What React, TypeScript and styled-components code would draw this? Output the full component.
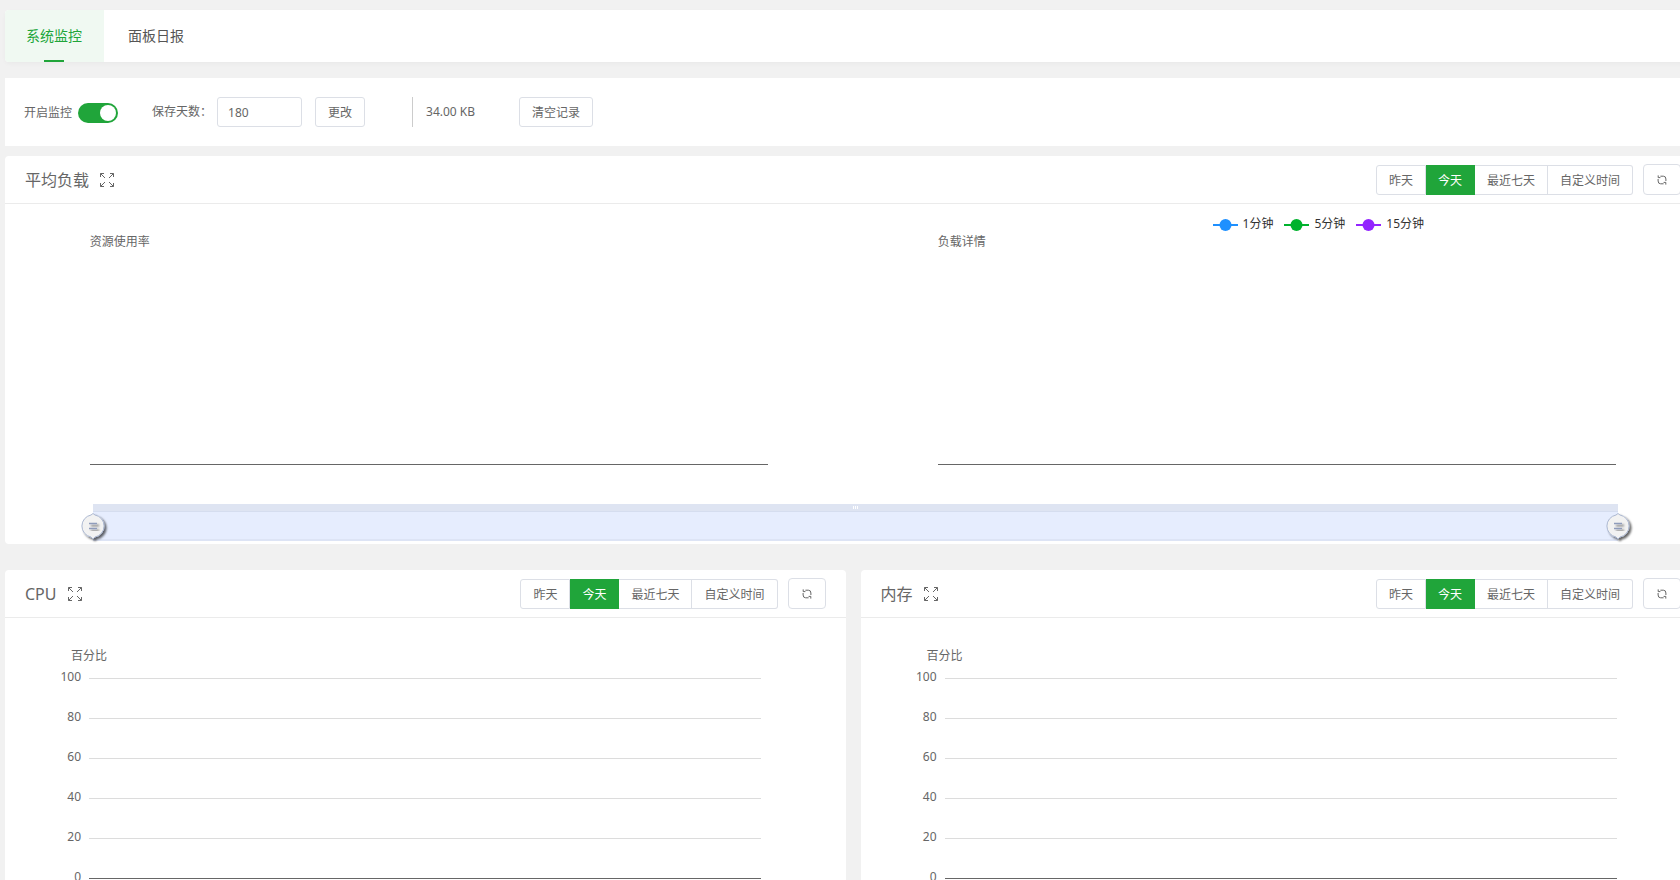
import React from "react";
import styled, { createGlobalStyle } from "styled-components";

const GREEN = "#20a53a";
const BORDER = "#dcdfe6";

const GlobalStyle = createGlobalStyle`
  * { box-sizing: border-box; }
  body {
    margin: 0;
    background: #f1f1f1;
    color: #666;
    font: 12px/16px "Noto Sans", "Noto Sans CJK SC", sans-serif;
  }
  button, input { font: inherit; color: inherit; margin: 0; }
  h2 { margin: 0; font-weight: 400; }
`;

const Viewport = styled.div`
  height: 100vh;
  overflow: hidden;
`;

/* The content is a little wider than the visible frame and runs under its right edge. */
const Page = styled.main`
  width: calc(100% + 16px);
  padding: 10px 0 0;
  margin-left: 5px;
`;

const Tabs = styled.nav`
  display: flex;
  height: 52px;
  margin-bottom: 16px;
  background: #fff;
  border-radius: 4px;
  box-shadow: 0 2px 4px rgba(0, 0, 0, 0.03);
`;

const Tab = styled.button<{ $active?: boolean }>`
  display: flex;
  flex-direction: column;
  align-items: center;
  justify-content: space-between;
  padding: 16px ${(p) => (p.$active ? "22px 0 21px" : "24px 0")};
  border: 0;
  border-radius: 4px 0 0 4px;
  font-size: 14px;
  line-height: 20px;
  cursor: pointer;
  color: ${(p) => (p.$active ? GREEN : "#555")};
  background: ${(p) => (p.$active ? "#f0f9f2" : "transparent")};

  &::after {
    content: "";
    width: 20px;
    height: 2px;
    background: ${(p) => (p.$active ? GREEN : "transparent")};
  }
`;

const Toolbar = styled.form`
  display: flex;
  align-items: center;
  height: 68px;
  padding: 0 19px;
  margin-bottom: 10px;
  background: #fff;
`;

const SwitchLabel = styled.label`
  display: flex;
  align-items: center;
  gap: 6px;
  padding-top: 2px;
  margin-right: 34px;
`;

const Switch = styled.input`
  appearance: none;
  display: flex;
  align-items: center;
  width: 40px;
  height: 20px;
  padding: 0 2px;
  border-radius: 10px;
  background: #ccc;
  cursor: pointer;

  &::before {
    content: "";
    width: 16px;
    height: 16px;
    border-radius: 50%;
    background: #fff;
  }
  &:checked {
    justify-content: flex-end;
    background: ${GREEN};
  }
`;

const DaysLabel = styled.label`
  display: flex;
  align-items: center;
  gap: 5px;
  margin-right: 13px;
`;

const DaysInput = styled.input`
  width: 85px;
  height: 30px;
  padding: 0 10px;
  border: 1px solid ${BORDER};
  border-radius: 3px;
  background: #fff;
`;

const Button = styled.button`
  height: 30px;
  padding: 2px 12px 0;
  border: 1px solid ${BORDER};
  border-radius: 3px;
  background: #fff;
  cursor: pointer;
`;

const LogSize = styled.div`
  height: 30px;
  margin: 0 44px 0 47px;
  padding-left: 13px;
  border-left: 1px solid #ccc;
  line-height: 30px;
`;

const Panel = styled.section`
  background: #fff;
  border-radius: 4px;
`;

const PanelHeader = styled.header`
  display: flex;
  align-items: flex-end;
  height: 48px;
  padding: 0 20px 8px;
  border-bottom: 1px solid #ebebeb;
`;

const Title = styled.h2`
  font-size: 16px;
  line-height: 30px;
  margin-right: 11px;
`;

const IconButton = styled.button`
  display: flex;
  align-items: center;
  height: 30px;
  padding: 0;
  margin-right: auto;
  border: 0;
  background: none;
  cursor: pointer;
`;

const RangeGroup = styled.div`
  display: flex;
  height: 30px;
  margin-right: 10px;
`;

const RangeButton = styled.button<{ $active?: boolean }>`
  padding: 2px 12px 0;
  border: 1px solid ${BORDER};
  border-left-width: 0;
  cursor: pointer;
  color: ${(p) => (p.$active ? "#fff" : "#666")};
  background: ${(p) => (p.$active ? GREEN : "#fff")};
  border-color: ${(p) => (p.$active ? GREEN : BORDER)};

  &:first-child {
    border-left-width: 1px;
    border-radius: 3px 0 0 3px;
  }
  &:last-child {
    border-radius: 0 3px 3px 0;
  }
`;

const RefreshButton = styled.button`
  display: flex;
  align-items: center;
  justify-content: center;
  width: 38px;
  height: 31px;
  padding: 0;
  border: 1px solid ${BORDER};
  border-radius: 4px;
  background: #fff;
  cursor: pointer;
`;

const LoadBody = styled.div`
  display: flex;
  flex-direction: column;
  padding: 12px 0 3px;
`;

const Legend = styled.ul`
  display: flex;
  gap: 11px;
  height: 16px;
  margin: 0 0 0 71.2%;
  padding: 0;
  list-style: none;
  color: #333;
`;

const LegendItem = styled.li`
  display: flex;
  align-items: center;
  gap: 5px;
  white-space: nowrap;
`;

const LoadPlots = styled.div`
  display: flex;
  justify-content: space-between;
  margin: 1px 5% 39px;
`;

const LoadPlot = styled.figure`
  /* 8/18 of the inner width leaves a tenth of the panel between the plots */
  width: calc(100% * 4 / 9);
  height: 232px;
  margin: 0;
  padding-top: 1px;
  border-bottom: 1px solid #666;
`;

const LoadPlotsRow = styled(LoadPlots)`
  display: grid;
  grid-template-columns: 40% 40%;
  column-gap: 10%;
  margin: 1px 0 39px;
  justify-content: center;

  ${LoadPlot} {
    width: auto;
  }
`;

const Zoom = styled.div`
  position: relative;
  height: 37px;
  margin: 0 83px 0 88px;
  background: #e6edfe;
  border-bottom: 2px solid #dde4f5;
`;

const ZoomBar = styled.div`
  display: flex;
  justify-content: center;
  align-items: center;
  gap: 1px;
  height: 8px;
  background: #dee4f2;
  border-bottom: 1px solid #d5ddef;
`;

const GripDot = styled.span`
  width: 1px;
  height: 3px;
  background: #fff;
`;

const HandleBox = styled.span<{ $side: "left" | "right" }>`
  position: absolute;
  top: 7px;
  ${(p) => p.$side}: -16px;
  height: 32px;
`;

const Columns = styled.div`
  display: grid;
  grid-template-columns: 1fr 1fr;
  gap: 15px;
  margin-top: 26px;
`;

const PercentChart = styled.figure`
  margin: 0;
  padding: 30px 0 40px;
`;

const AxisName = styled.figcaption`
  width: 20%;
  margin-bottom: 5px;
  text-align: center;
`;

const ScaleRow = styled.div`
  display: grid;
  grid-template-columns: 10% 80%;
  height: 40px;
`;

const ScaleLabel = styled.span`
  padding-right: 8px;
  text-align: right;
`;

const ScaleLine = styled.span<{ $base: boolean }>`
  height: 1px;
  margin-top: 9px;
  background: ${(p) => (p.$base ? "#666" : "#dcdcdc")};
`;

const ExpandIcon = () => (
  <svg width="14" height="14" viewBox="0 0 14 14" fill="none" stroke="#666">
    <path d="M0.5 4V0.5H4M0.5 0.5L5 5M10 0.5h3.5V4M13.5 0.5L9 5M0.5 10v3.5H4M0.5 13.5L5 9M10 13.5h3.5V10M13.5 13.5L9 9" />
  </svg>
);

const RefreshIcon = () => (
  <svg width="10" height="10" viewBox="0 0 10 10" fill="none" stroke="#666">
    <path d="M3.4 1.2H6.4Q8.9 1.2 8.9 4V6M6.6 8.8H3.6Q1.1 8.8 1.1 6V4" />
    <path d="M1.2 0.4V2.6H3.4M8.8 9.6V7.4H6.6" />
  </svg>
);

const HandleIcon = ({ id }: { id: string }) => (
  <svg width="32" height="32" viewBox="0 0 32 32">
    <defs>
      <filter id={id} x="-30%" y="-30%" width="170%" height="170%">
        <feDropShadow dx="2" dy="2" stdDeviation="1.2" floodColor="#000" floodOpacity="0.6" />
      </filter>
    </defs>
    <g filter={`url(#${id})`}>
      <path
        d="M16 2.5l2 1.5a11.2 11.2 0 0 1 0 22l-2 2-2-2a11.2 11.2 0 0 1 0-22z"
        fill="#f2f2f2"
        stroke="#acb8d1"
      />
    </g>
    <g filter={`url(#${id})`} stroke="#8f9cbb" strokeWidth="1.4">
      <path d="M12 12.5h8M12 17.5h8" />
    </g>
  </svg>
);

const RANGES = ["昨天", "今天", "最近七天", "自定义时间"];
const LEGEND = [
  { name: "1分钟", color: "#1e90ff" },
  { name: "5分钟", color: "#00b22d" },
  { name: "15分钟", color: "#9325ff" },
];
const SCALE = [100, 80, 60, 40, 20, 0];

const Header = ({ title }: { title: string }) => (
  <PanelHeader>
    <Title>{title}</Title>
    <IconButton type="button" aria-label="全屏">
      <ExpandIcon />
    </IconButton>
    <RangeGroup>
      {RANGES.map((r) => (
        <RangeButton key={r} type="button" $active={r === "今天"}>
          {r}
        </RangeButton>
      ))}
    </RangeGroup>
    <RefreshButton type="button" aria-label="刷新">
      <RefreshIcon />
    </RefreshButton>
  </PanelHeader>
);

const PercentPanel = ({ title }: { title: string }) => (
  <Panel>
    <Header title={title} />
    <PercentChart>
      <AxisName>百分比</AxisName>
      {SCALE.map((v) => (
        <ScaleRow key={v}>
          <ScaleLabel>{v}</ScaleLabel>
          <ScaleLine $base={v === 0} />
        </ScaleRow>
      ))}
    </PercentChart>
  </Panel>
);

export default function App() {
  return (
    <Viewport>
      <GlobalStyle />
      <Page>
        <Tabs>
          <Tab type="button" $active>
            系统监控
          </Tab>
          <Tab type="button">面板日报</Tab>
        </Tabs>
        <Toolbar>
          <SwitchLabel>
            开启监控
            <Switch type="checkbox" defaultChecked />
          </SwitchLabel>
          <DaysLabel>
            保存天数：
            <DaysInput type="text" defaultValue="180" />
          </DaysLabel>
          <Button type="button">更改</Button>
          <LogSize>34.00 KB</LogSize>
          <Button type="button">清空记录</Button>
        </Toolbar>
        <Panel>
          <Header title="平均负载" />
          <LoadBody>
            <Legend>
              {LEGEND.map((l) => (
                <LegendItem key={l.name}>
                  <svg width="25" height="14" viewBox="0 0 25 14">
                    <path d="M0 8h25" stroke={l.color} strokeWidth="2" />
                    <circle cx="12.5" cy="8" r="6" fill={l.color} />
                  </svg>
                  {l.name}
                </LegendItem>
              ))}
            </Legend>
            <LoadPlotsRow>
              <LoadPlot>
                <figcaption>资源使用率</figcaption>
              </LoadPlot>
              <LoadPlot>
                <figcaption>负载详情</figcaption>
              </LoadPlot>
            </LoadPlotsRow>
            <Zoom>
              <ZoomBar>
                <GripDot />
                <GripDot />
                <GripDot />
              </ZoomBar>
              <HandleBox $side="left">
                <HandleIcon id="handle-start" />
              </HandleBox>
              <HandleBox $side="right">
                <HandleIcon id="handle-end" />
              </HandleBox>
            </Zoom>
          </LoadBody>
        </Panel>
        <Columns>
          <PercentPanel title="CPU" />
          <PercentPanel title="内存" />
        </Columns>
      </Page>
    </Viewport>
  );
}
